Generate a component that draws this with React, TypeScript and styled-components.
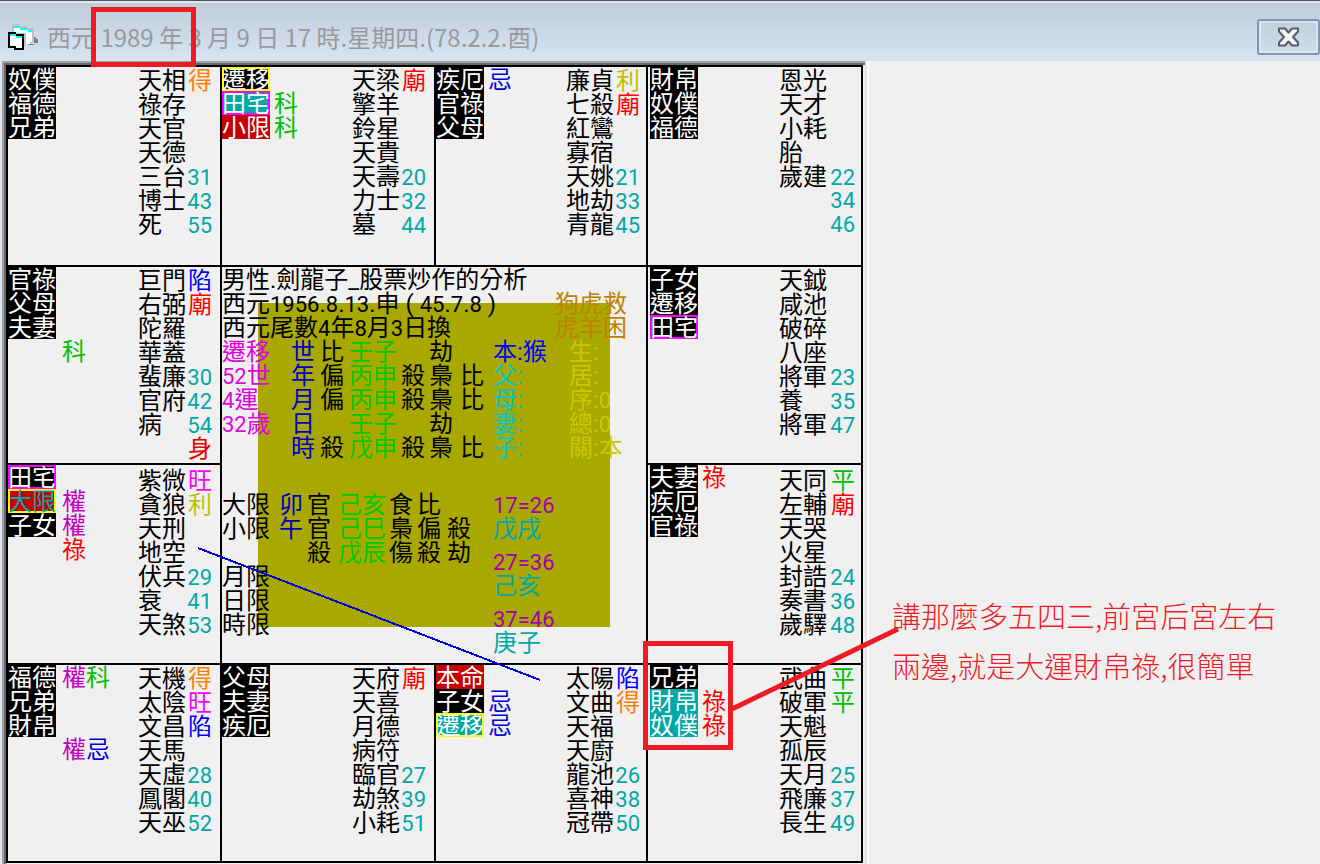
import React from "react";
import styled, { createGlobalStyle, css } from "styled-components";

const GlobalStyle = createGlobalStyle`
  *, *::before, *::after { box-sizing: border-box; }
  body {
    margin: 0;
    background: #f0f0f0;
    color: #000;
    font-family: Roboto, "Noto Sans CJK TC", sans-serif;
    font-size: 24px;
    line-height: 24px;
  }
`;

/* ---------- window frame ---------- */

const Window = styled.div`
  position: relative;
  min-height: 100vh;
  display: flex;
  flex-direction: column;
`;

const TitleBar = styled.header`
  position: relative;
  display: flex;
  align-items: center;
  gap: 8px;
  height: 61px;
  padding: 12px 0 0 8px;
  border-top: 1px solid #505055;
  background: linear-gradient(#e4e8ee 0 2px, #c0ccda 2px, #d7e4f2 100%);
`;

const Title = styled.h1`
  flex: 1;
  margin: 0;
  color: #999a9e;
  font-family: "Noto Sans CJK TC", sans-serif;
  font-size: 24px;
  font-weight: 400;
  line-height: 32px;
  white-space: nowrap;
`;

const CloseButton = styled.button`
  display: flex;
  align-items: center;
  justify-content: center;
  width: 63px;
  height: 36px;
  padding: 0;
  border: 2px solid #8793b0;
  border-radius: 3px;
  background: linear-gradient(#c3cfdd, #cfdcea);
  box-shadow: inset 0 0 0 2px #dbe5f0;
`;

const Workspace = styled.main`
  position: relative;
  flex: 1;
  display: flex;
  align-items: stretch;
`;

const BoardFrame = styled.div`
  flex: 0 1 869px;
  padding-right: 2px;
  border-left: 2px solid #dae6f3;
  border-right: 2px solid #fff;
  box-shadow: inset -2px 0 0 #e3e3e3;
`;

const BoardEdge = styled.div`
  height: 100%;
  padding-right: 2px;
  border: 0 solid #a0a0a0;
  border-width: 2px 0 0 2px;
  box-shadow: inset 2px 2px 0 #696969;
`;

const Board = styled.div`
  position: relative;
  display: grid;
  grid-template-columns: 214fr 214fr 212fr 217fr;
  grid-template-rows: minmax(200px, auto) minmax(198px, auto) minmax(200px, auto) minmax(200px, auto);
  margin: 0;
  padding: 2px 0 0 2px;
`;

/* ---------- palace cells ---------- */

const PalaceBox = styled.section<{ $last: boolean; $bottom: boolean; $wide: boolean }>`
  position: relative;
  display: flex;
  border: 0 solid #000;
  border-width: 2px ${(p) => (p.$last ? "2px" : "0")} ${(p) => (p.$bottom ? "2px" : "0")} 2px;
  padding-left: ${(p) => (p.$last ? "2px" : "0")};
  padding-right: ${(p) => (p.$wide ? "8px" : "6px")};
`;

const TagList = styled.div<{ $first: boolean }>`
  flex: 0 0 ${(p) => (p.$first ? "54px" : "52px")};
`;

const ChangeList = styled.div`
  flex: 0 0 48px;
`;

const StarList = styled.div<{ $low: boolean; $last: boolean }>`
  flex: 1;
  padding: ${(p) => (p.$low ? "3px" : "1px")} 0 0;
  margin-left: auto;
  max-width: ${(p) => (p.$last ? "76px" : "74px")};
`;

type TagKind = "plain" | "now" | "year";
type Outline = "none" | "yellow" | "magenta";

const tagFill: Record<TagKind, string> = { plain: "#000", now: "#00a8a8", year: "#c80000" };
const outlineColor: Record<Outline, string> = { none: "transparent", yellow: "#ff0", magenta: "#f0f" };

const Tag = styled.div<{ $kind: TagKind; $outline: Outline; $ink?: string }>`
  width: 48px;
  height: 24px;
  padding-top: 1px;
  color: ${(p) => p.$ink || "#fff"};
  background: ${(p) => tagFill[p.$kind]};
  ${(p) => p.$outline !== "none" && css`box-shadow: inset 0 0 0 2px ${outlineColor[p.$outline]};`}
`;

const Line = styled.div`
  height: 24px;
  padding-top: 1px;
  white-space: nowrap;
`;

const StarRow = styled.div`
  display: flex;
  align-items: baseline;
  justify-content: space-between;
  height: 24px;
  padding-top: 1px;
  white-space: nowrap;
`;

const Ink = styled.span<{ $color: string }>`
  color: ${(p) => p.$color};
`;

const Num = styled.span`
  margin-left: auto;
  color: #00a8a8;
  font-size: 22px;
`;

const Side = styled(Ink)`
  margin-left: auto;
`;

const inkOf: Record<string, string> = {
  得: "#ff8000", 廟: "#ff0000", 利: "#c0c000", 陷: "#0000ff", 旺: "#ff00ff",
  平: "#00c000", 身: "#e60000", 科: "#00c000", 權: "#c000c0", 祿: "#ff0000", 忌: "#0000e0",
};

interface TagData { text: string; kind: TagKind; outline: Outline; ink?: string }
interface Palace {
  area: string;
  tags: TagData[];
  changes: string[];
  stars: [string, string][];
}

const t = (text: string, kind: TagKind = "plain", outline: Outline = "none", ink?: string): TagData => ({ text, kind, outline, ink });

const palaces: Palace[] = [
  { area: "1 / 1", tags: [t("奴僕"), t("福德"), t("兄弟")], changes: [],
    stars: [["天相", "得"], ["祿存", ""], ["天官", ""], ["天德", ""], ["三台", "31"], ["博士", "43"], ["死", "55"]] },
  { area: "1 / 2", tags: [t("遷移", "plain", "yellow"), t("田宅", "now", "magenta"), t("小限", "year")], changes: ["", "科", "科"],
    stars: [["天梁", "廟"], ["擎羊", ""], ["鈴星", ""], ["天貴", ""], ["天壽", "20"], ["力士", "32"], ["墓", "44"]] },
  { area: "1 / 3", tags: [t("疾厄"), t("官祿"), t("父母")], changes: ["忌"],
    stars: [["廉貞", "利"], ["七殺", "廟"], ["紅鸞", ""], ["寡宿", ""], ["天姚", "21"], ["地劫", "33"], ["青龍", "45"]] },
  { area: "1 / 4", tags: [t("財帛"), t("奴僕"), t("福德")], changes: [],
    stars: [["恩光", ""], ["天才", ""], ["小耗", ""], ["胎", ""], ["歲建", "22"], ["", "34"], ["", "46"]] },
  { area: "2 / 1", tags: [t("官祿"), t("父母"), t("夫妻")], changes: ["", "", "", "科"],
    stars: [["巨門", "陷"], ["右弼", "廟"], ["陀羅", ""], ["華蓋", ""], ["蜚廉", "30"], ["官府", "42"], ["病", "54"], ["", "身"]] },
  { area: "2 / 4", tags: [t("子女"), t("遷移"), t("田宅", "plain", "magenta")], changes: [],
    stars: [["天鉞", ""], ["咸池", ""], ["破碎", ""], ["八座", ""], ["將軍", "23"], ["養", "35"], ["將軍", "47"]] },
  { area: "3 / 1", tags: [t("田宅", "plain", "magenta"), t("大限", "year", "yellow", "#00a8a8"), t("子女")], changes: ["", "權", "權", "祿"],
    stars: [["紫微", "旺"], ["貪狼", "利"], ["天刑", ""], ["地空", ""], ["伏兵", "29"], ["衰", "41"], ["天煞", "53"]] },
  { area: "3 / 4", tags: [t("夫妻"), t("疾厄"), t("官祿")], changes: ["祿"],
    stars: [["天同", "平"], ["左輔", "廟"], ["天哭", ""], ["火星", ""], ["封誥", "24"], ["奏書", "36"], ["歲驛", "48"]] },
  { area: "4 / 1", tags: [t("福德"), t("兄弟"), t("財帛")], changes: ["權科", "", "", "權忌"],
    stars: [["天機", "得"], ["太陰", "旺"], ["文昌", "陷"], ["天馬", ""], ["天虛", "28"], ["鳳閣", "40"], ["天巫", "52"]] },
  { area: "4 / 2", tags: [t("父母"), t("夫妻"), t("疾厄")], changes: [],
    stars: [["天府", "廟"], ["天喜", ""], ["月德", ""], ["病符", ""], ["臨官", "27"], ["劫煞", "39"], ["小耗", "51"]] },
  { area: "4 / 3", tags: [t("本命", "year"), t("子女"), t("遷移", "now", "yellow")], changes: ["", "忌", "忌"],
    stars: [["太陽", "陷"], ["文曲", "得"], ["天福", ""], ["天廚", ""], ["龍池", "26"], ["喜神", "38"], ["冠帶", "50"]] },
  { area: "4 / 4", tags: [t("兄弟"), t("財帛", "now"), t("奴僕", "now")], changes: ["", "祿", "祿"],
    stars: [["武曲", "平"], ["破軍", "平"], ["天魁", ""], ["孤辰", ""], ["天月", "25"], ["飛廉", "37"], ["長生", "49"]] },
];

const GridSlot = styled.div<{ $area: string }>`
  grid-area: ${(p) => p.$area};
  display: grid;
`;

function PalaceCell({ palace, children }: { palace: Palace; children?: React.ReactNode }) {
  const [row, col] = palace.area.split(" / ");
  return (
    <GridSlot $area={palace.area}>
      <PalaceBox $last={col === "4"} $bottom={row === "4"} $wide={col < "3"}>
        <TagList $first={col === "1"}>
          {palace.tags.map((tag, i) => (
            <Tag key={i} $kind={tag.kind} $outline={tag.outline} $ink={tag.ink}>{tag.text}</Tag>
          ))}
        </TagList>
        <ChangeList>
          {palace.changes.map((line, i) => (
            <Line key={i}>
              {[...line].map((c, k) => <Ink key={k} $color={inkOf[c]}>{c}</Ink>)}
            </Line>
          ))}
        </ChangeList>
        <StarList $low={row === "3"} $last={col === "4"}>
          {palace.stars.map(([name, side], i) => (
            <StarRow key={i}>
              {name && <span>{name}</span>}
              {/\d/.test(side) ? <Num>{side}</Num> : side && <Side $color={inkOf[side]}>{side}</Side>}
            </StarRow>
          ))}
        </StarList>
        {children}
      </PalaceBox>
    </GridSlot>
  );
}

/* ---------- centre panel ---------- */

const Center = styled.section`
  grid-area: 2 / 2 / 4 / 4;
  position: relative;
  border: 0 solid #000;
  border-width: 2px 0 0 2px;
`;

const OliveField = styled.div`
  position: absolute;
  inset: 36px;
  background: #a8a800;
`;

const CenterText = styled.div`
  position: relative;
  display: flex;
  flex-direction: column;
  gap: 33px;
`;

const Heading = styled.div`
  display: flex;
  justify-content: space-between;
  height: 72px;
  padding-right: 19px;
  white-space: pre;
`;

const Verse = styled.div`
  width: 72px;
  padding-top: 24px;
  color: #c08000;
`;

const ChartTable = styled.table`
  border-collapse: collapse;
  table-layout: fixed;
  width: 424px;
  td {
    height: 24px;
    padding: 0;
    white-space: nowrap;
  }
`;

const Data = styled.td<{ $color: string }>`
  color: ${(p) => p.$color};
`;

const LimitBlock = styled.div`
  display: flex;
  align-items: flex-start;
`;

const SpanList = styled.div`
  display: flex;
  flex-direction: column;
  gap: 9px;
`;

const Half = styled.span`
  font-size: 22px;
`;

const pillarWidths = [69, 29, 29, 52, 28, 31, 33, 76, 77];
const pillarInk = ["#e000e0", "#0000c8", "#000", "#00c800", "#000", "#000", "#000", "#00c8c8", "#c8c800"];
const pillars = [
  ["遷移", "世", "比", "壬子", "", "劫", "", "本:猴", "生:"],
  ["52世", "年", "偏", "丙申", "殺", "梟", "比", "父:", "居:"],
  ["4運", "月", "偏", "丙申", "殺", "梟", "比", "母:", "序:0"],
  ["32歲", "日", "", "壬子", "", "劫", "", "妻:", "總:0"],
  ["", "時", "殺", "戊申", "殺", "梟", "比", "子:", "關:本"],
];

const limitWidths = [57, 28, 31, 51, 28, 30, 46];
const limitInk = ["#000", "#0000c8", "#000", "#00c800", "#000", "#000", "#000"];
const limits = [
  ["大限", "卯", "官", "己亥", "食", "比", ""],
  ["小限", "午", "官", "己巳", "梟", "偏", "殺"],
  ["", "", "殺", "戊辰", "傷", "殺", "劫"],
  ["月限", "", "", "", "", "", ""],
  ["日限", "", "", "", "", "", ""],
  ["時限", "", "", "", "", "", ""],
];

const LimitTable = styled(ChartTable)`
  width: 271px;
`;

const withDigits = (text: string) =>
  text.split(/(\d+)/).map((part, i) => (/\d/.test(part) ? <Half key={i}>{part}</Half> : part));

function Columns({ widths }: { widths: number[] }) {
  return <colgroup>{widths.map((w, i) => <col key={i} width={w} />)}</colgroup>;
}

function CenterPanel() {
  return (
    <Center>
      <OliveField />
      <CenterText>
        <div>
          <Heading>
            <div>
              <Line>男性.劍龍子_股票炒作的分析</Line>
              <Line>{withDigits("西元1956.8.13.申 ( 45.7.8 )")}</Line>
              <Line>{withDigits("西元尾數4年8月3日換")}</Line>
            </div>
            <Verse>
              <Line>狗虎救</Line>
              <Line>虎羊困</Line>
            </Verse>
          </Heading>
          <ChartTable>
            <Columns widths={pillarWidths} />
            <tbody>
              {pillars.map((row, r) => (
                <tr key={r}>
                  {row.map((text, c) => (
                    <Data key={c} $color={r === 0 && c === 7 ? "#0000ff" : pillarInk[c]}>
                      <Line>{withDigits(text)}</Line>
                    </Data>
                  ))}
                </tr>
              ))}
            </tbody>
          </ChartTable>
        </div>
        <LimitBlock>
          <LimitTable>
            <Columns widths={limitWidths} />
            <tbody>
              {limits.map((row, r) => (
                <tr key={r}>
                  {row.map((text, c) => <Data key={c} $color={limitInk[c]}><Line>{text}</Line></Data>)}
                </tr>
              ))}
            </tbody>
          </LimitTable>
          <SpanList>
            {[["17=26", "戊戌"], ["27=36", "己亥"], ["37=46", "庚子"]].map(([range, pair]) => (
              <div key={range}>
                <Line><Ink $color="#a800a8"><Half>{range}</Half></Ink></Line>
                <Line><Ink $color="#00a8a8">{pair}</Ink></Line>
              </div>
            ))}
          </SpanList>
        </LimitBlock>
      </CenterText>
    </Center>
  );
}

/* ---------- mark-up drawn over the window ---------- */

const YearMarker = styled.div`
  position: absolute;
  left: 91px;
  top: 6px;
  width: 105px;
  height: 60px;
  border: 5px solid #ed1c24;
  z-index: 2;
`;

const PalaceMarker = styled.div`
  position: absolute;
  left: -5px;
  top: -24px;
  width: 90px;
  height: 109px;
  border: 5px solid #ed1c24;
  z-index: 2;
`;

const Strokes = styled.svg`
  position: absolute;
  left: 0;
  top: 0;
  z-index: 2;
  pointer-events: none;
`;

const Note = styled.p`
  flex: 1;
  margin: 0;
  padding: 529px 24px 0 23px;
  color: #ed1c24;
  font-family: "Noto Sans CJK TC", sans-serif;
  font-size: 29px;
  font-weight: 300;
  line-height: 50px;
`;

function FormIcon() {
  return (
    <svg width="31" height="26" viewBox="0 0 31 26" shapeRendering="crispEdges" aria-hidden="true">
      <path fill="#c0c0c0" d="M4 0h7v2h8v2h7v14h-2v2h-6v2h-2V10H4z" />
      <path fill="#fff" d="M6 4h7v2h7v2h4v10h-2v2h-4V9H6z" />
      <path fill="#00ffff" d="M5 2h7v2H5zM12 4h7v2h-7zM20 6h4v2h-4z" />
      <path fill="#808080" d="M26 13h2v2h2v4h-4zM20 20h6v1h-6z" />
      <path fill="#000" d="M0 8h8v2h8v16H6v-2H0z" />
      <path fill="#fff" d="M2 12h6v2h6v10H8v-2H2z" />
      <path fill="#00ffff" d="M2 10h6v2H2zM8 12h6v2H8z" />
    </svg>
  );
}

export default function App() {
  return (
    <Window>
      <GlobalStyle />
      <TitleBar>
        <FormIcon />
        <Title>西元 1989 年 3 月 9 日 17 時.星期四.(78.2.2.酉)</Title>
        <CloseButton type="button" aria-label="關閉">
          <svg width="24" height="20" viewBox="0 0 24 20" aria-hidden="true">
            <path
              d="M2 1.500h6l3.500 4 3.500-4h6v3L16 10l5 5.500v3h-6l-3.500-4-3.500 4H2v-3L7 10 2 4.500z"
              fill="#f4f4f4" stroke="#555c6c" strokeWidth="2" strokeLinejoin="round"
            />
          </svg>
        </CloseButton>
        <YearMarker />
      </TitleBar>
      <Workspace>
        <BoardFrame>
          <BoardEdge>
            <Board>
              {palaces.map((p) => (
                <PalaceCell key={p.area} palace={p}>
                  {p.area === "4 / 4" && <PalaceMarker />}
                </PalaceCell>
              ))}
              <CenterPanel />
            </Board>
          </BoardEdge>
        </BoardFrame>
        <Note>
          講那麼多五四三,前宮后宮左右
          <br />
          兩邊,就是大運財帛祿,很簡單
        </Note>
        <Strokes width="910" height="720" aria-hidden="true">
          <path d="M198 487L540 619" stroke="#0000d8" strokeWidth="2" shapeRendering="crispEdges" />
          <path d="M732 648L898 568" stroke="#ed1c24" strokeWidth="5" />
        </Strokes>
      </Workspace>
    </Window>
  );
}
